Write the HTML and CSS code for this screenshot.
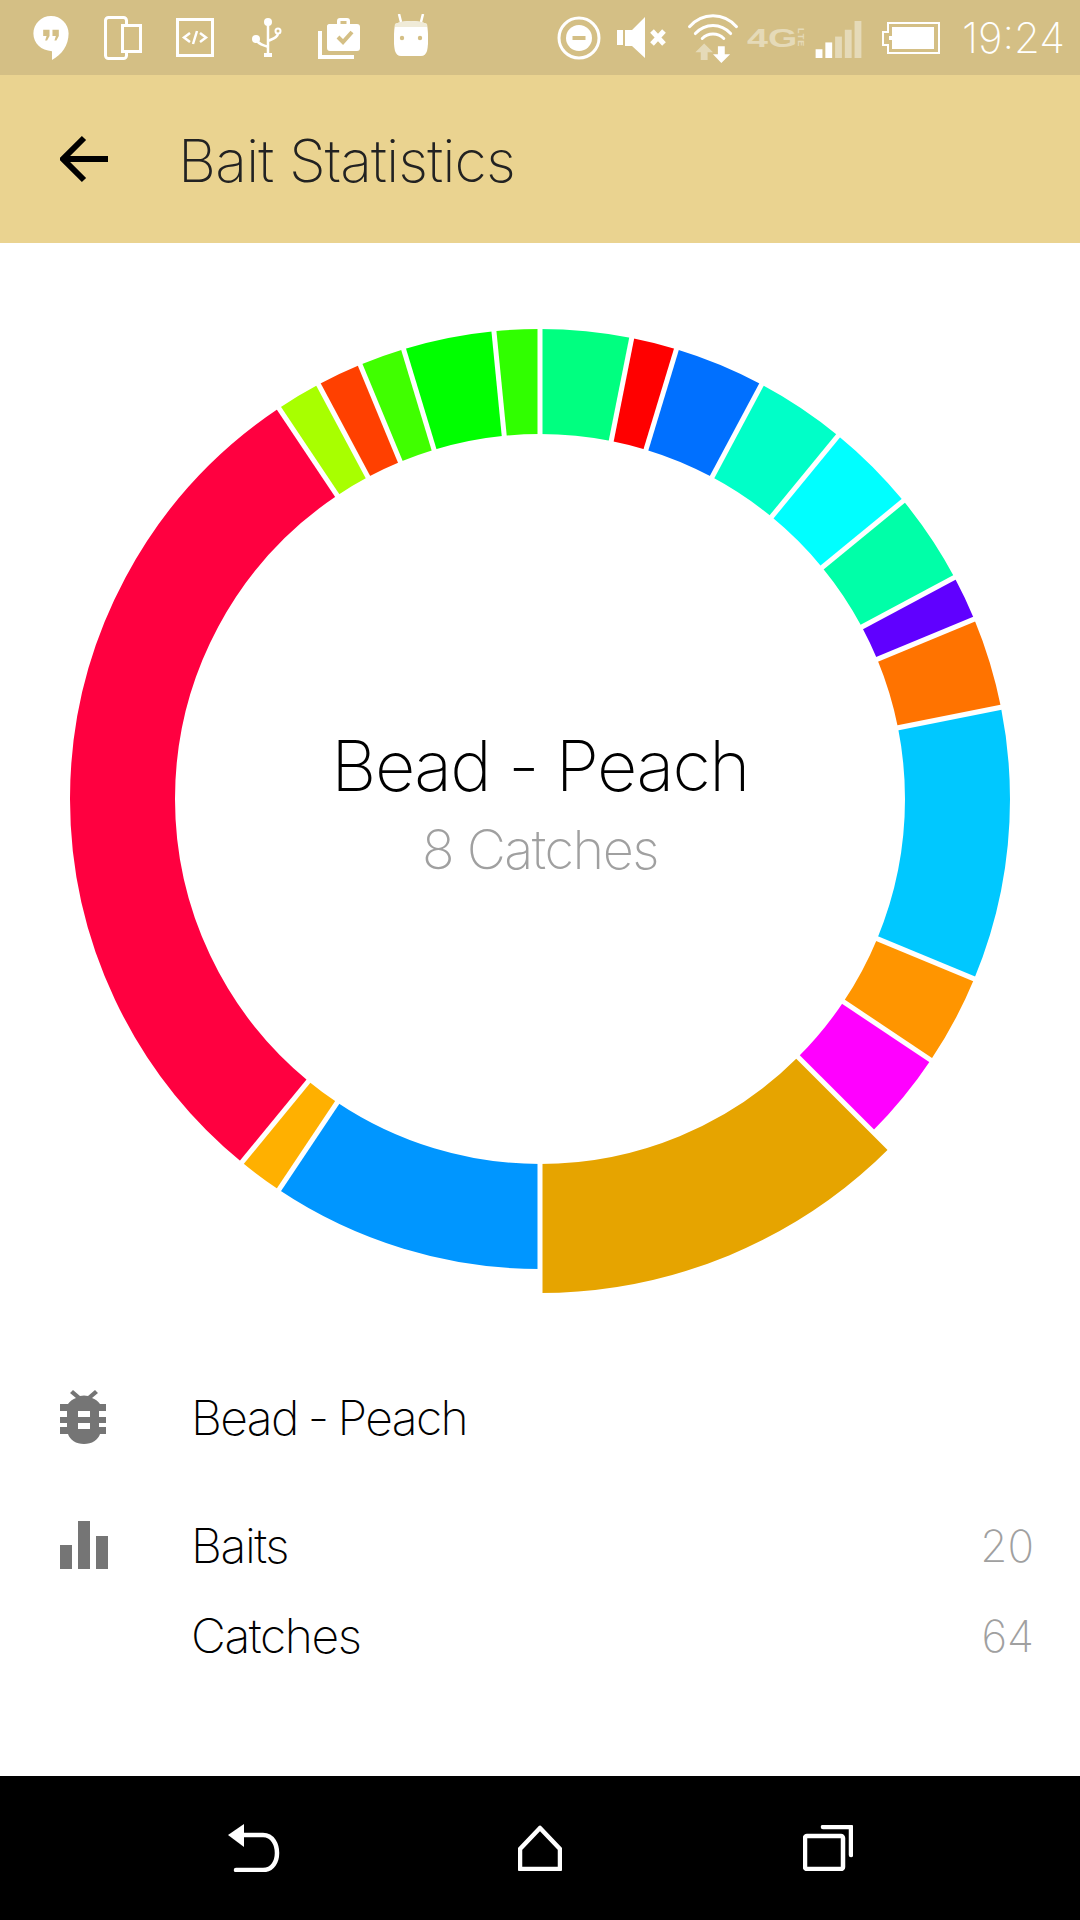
FILE: index.html
```html
<!DOCTYPE html>
<html lang="en">
<head>
  <meta charset="UTF-8" />
  <meta name="viewport" content="width=device-width, initial-scale=1.0"/>
  <title>Bait Statistics</title>
  <link rel="stylesheet" href="styles.css">
</head>
<body>
  <div class="status-bar">
    <div class="status-left">
      <span class="slot">
        <svg width="36" height="44" viewBox="0 0 36 45">
          <path class="w" d="M18 0C8 0 0 8 0 18c0 10 8 17.500 19 18v9c10-5 17-15 17-27C36 8 28 0 18 0z"/>
          <path class="t" d="M10 14h6.500v6.500l-2.500 4.500h-2l1.500-4.500H10zM19.500 14H26v6.500L23.500 25h-2l1.500-4.500h-3.500z"/>
        </svg>
      </span>
      <span class="slot">
        <svg width="38" height="44" viewBox="0 0 38 44">
          <rect class="o" x="1.500" y="1.500" width="21" height="41" rx="3"/>
          <rect class="ot" x="18.500" y="9.500" width="18" height="26"/>
        </svg>
      </span>
      <span class="slot">
        <svg width="38" height="39" viewBox="0 0 38 39">
          <rect class="o" x="1.500" y="1.500" width="35" height="36"/>
          <path class="ln" d="M14 15l-6 4.500 6 4.500M24 15l6 4.500-6 4.500M21 13l-4 13"/>
        </svg>
      </span>
      <span class="slot">
        <svg width="30" height="39" viewBox="0 0 30 39">
          <circle class="w" cx="16" cy="4" r="4"/>
          <circle class="w" cx="4" cy="21" r="4"/>
          <circle class="o2" cx="26" cy="13" r="2.500"/>
          <path class="ln2" d="M16 4v32M4 21c2 6 8 6 12 8M26 15c0 5-6 6-10 8"/>
          <rect class="w" x="12" y="35" width="8" height="4"/>
        </svg>
      </span>
      <span class="slot slot-case">
        <svg width="42" height="41" viewBox="0 0 42 41">
          <path class="ln3" d="M2 13v26h34"/>
          <path class="w" d="M11 6h8V3c0-2 1-3 3-3h7c2 0 3 1 3 3v3h7c2 0 3 1 3 3v21c0 2-1 3-3 3H12c-2 0-3-1-3-3V8c0-1 1-2 2-2zM22.500 3v3h6V3z"/>
          <path class="ck" d="M20 19l5 5 9-10"/>
        </svg>
      </span>
      <span class="slot slot-droid">
        <svg width="34" height="42" viewBox="0 0 34 42">
          <path class="ln2" d="M7 8L5 0M27 8l2-8"/>
          <path class="w" d="M17 7c-6 0-12 1-16 3C0 17-1 28 1 37c1 3 3 5 6 5h20c3 0 5-2 6-5 2-9 1-20 0-27-4-2-10-3-16-3z"/>
          <path class="cap" d="M17 7c-6 0-12 1-16 3v3h32v-3c-4-2-10-3-16-3z"/>
          <circle class="t" cx="8" cy="24" r="2.200"/>
          <circle class="t" cx="26" cy="24" r="2.200"/>
        </svg>
      </span>
    </div>
    <div class="status-right">
      <svg class="ic-dnd" width="44" height="44" viewBox="0 0 44 44">
        <circle class="o" cx="22" cy="22" r="20"/>
        <circle class="w" cx="22" cy="22" r="13"/>
        <rect class="t" x="15.500" y="20" width="13" height="4"/>
      </svg>
      <svg class="ic-vol" width="50" height="42" viewBox="0 0 50 42">
        <path class="w" d="M0 13h6v15H0zM8 13h7L28 0v41L15 29H8z"/>
        <path class="x" d="M35 14l12 13M47 14L35 27"/>
      </svg>
      <svg class="ic-wifi" width="52" height="50" viewBox="0 0 52 51">
        <path class="arc" d="M2 14C15 -1 37 -1 50 14M8 21c10-11 26-11 36 0M15 26c6-6 16-6 22 0"/>
        <path class="dim" d="M17 31l9 9h-5.500v8h-7v-8H8z"/>
        <path class="w" d="M31 34h7v8h5.500L34.500 51 26 42h5z"/>
      </svg>
      <span class="lte">
        <span class="lte-big">4G</span>
        <span class="lte-small">LTE</span>
      </span>
      <svg class="ic-sig" width="47" height="37" viewBox="0 0 47 38">
        <rect class="w" x="0" y="29" width="7" height="9"/>
        <rect class="w" x="10" y="22" width="7" height="16"/>
        <rect class="dim" x="20" y="16" width="7" height="22"/>
        <rect class="dim" x="30" y="9" width="7" height="29"/>
        <rect class="dim" x="40" y="0" width="7" height="38"/>
      </svg>
      <svg class="ic-bat" width="58" height="32" viewBox="0 0 58 32">
        <path class="bat" d="M6 1h51v30H6v-8H1V10h5z"/>
        <path class="w" d="M10 5h42v22H10v-9H7v-4h3z"/>
      </svg>
      <span class="clock">19:24</span>
    </div>
  </div>

  <header class="app-bar">
    <svg class="back" width="48" height="48" viewBox="0 0 48 48">
      <path d="M24 3L3 24l21 21M3 24h45"/>
    </svg>
    <h1>Bait Statistics</h1>
  </header>

  <main class="content">
    <div class="chart">
      <svg class="donut" width="1080" height="1110" viewBox="0 1 1080 1110">
        <g transform="rotate(-90 540 557)" fill="none">
          <circle class="slice" pathLength="64" stroke="#00ff80" stroke-dasharray="2 62" stroke-dashoffset="0"/>
          <circle class="slice" pathLength="64" stroke="#ff0000" stroke-dasharray="1 63" stroke-dashoffset="-2"/>
          <circle class="slice" pathLength="64" stroke="#0070ff" stroke-dasharray="2 62" stroke-dashoffset="-3"/>
          <circle class="slice" pathLength="64" stroke="#00ffc8" stroke-dasharray="2 62" stroke-dashoffset="-5"/>
          <circle class="slice" pathLength="64" stroke="#00ffff" stroke-dasharray="2 62" stroke-dashoffset="-7"/>
          <circle class="slice" pathLength="64" stroke="#00ffa8" stroke-dasharray="2 62" stroke-dashoffset="-9"/>
          <circle class="slice" pathLength="64" stroke="#6000ff" stroke-dasharray="1 63" stroke-dashoffset="-11"/>
          <circle class="slice" pathLength="64" stroke="#ff7300" stroke-dasharray="2 62" stroke-dashoffset="-12"/>
          <circle class="slice" pathLength="64" stroke="#00c8ff" stroke-dasharray="6 58" stroke-dashoffset="-14"/>
          <circle class="slice" pathLength="64" stroke="#ff9500" stroke-dasharray="2 62" stroke-dashoffset="-20"/>
          <circle class="slice" pathLength="64" stroke="#ff00ff" stroke-dasharray="2 62" stroke-dashoffset="-22"/>
          <circle class="slice-on" pathLength="64" stroke="#e6a400" stroke-dasharray="8 56" stroke-dashoffset="-24"/>
          <circle class="slice" pathLength="64" stroke="#0096ff" stroke-dasharray="6 58" stroke-dashoffset="-32"/>
          <circle class="slice" pathLength="64" stroke="#ffb000" stroke-dasharray="1 63" stroke-dashoffset="-38"/>
          <circle class="slice" pathLength="64" stroke="#ff0040" stroke-dasharray="19 45" stroke-dashoffset="-39"/>
          <circle class="slice" pathLength="64" stroke="#a8ff00" stroke-dasharray="1 63" stroke-dashoffset="-58"/>
          <circle class="slice" pathLength="64" stroke="#ff4000" stroke-dasharray="1 63" stroke-dashoffset="-59"/>
          <circle class="slice" pathLength="64" stroke="#40ff00" stroke-dasharray="1 63" stroke-dashoffset="-60"/>
          <circle class="slice" pathLength="64" stroke="#00ff00" stroke-dasharray="2 62" stroke-dashoffset="-61"/>
          <circle class="slice" pathLength="64" stroke="#30ff00" stroke-dasharray="1 63" stroke-dashoffset="-63"/>
        </g>
        <!-- white gaps between the slices -->
        <g class="gaps">
          <line x1="540" y1="557" x2="540" y2="40"/>
          <line x1="540" y1="557" x2="540" y2="40" transform="rotate(11.25 540 557)"/>
          <line x1="540" y1="557" x2="540" y2="40" transform="rotate(16.875 540 557)"/>
          <line x1="540" y1="557" x2="540" y2="40" transform="rotate(28.125 540 557)"/>
          <line x1="540" y1="557" x2="540" y2="40" transform="rotate(39.375 540 557)"/>
          <line x1="540" y1="557" x2="540" y2="40" transform="rotate(50.625 540 557)"/>
          <line x1="540" y1="557" x2="540" y2="40" transform="rotate(61.875 540 557)"/>
          <line x1="540" y1="557" x2="540" y2="40" transform="rotate(67.5 540 557)"/>
          <line x1="540" y1="557" x2="540" y2="40" transform="rotate(78.75 540 557)"/>
          <line x1="540" y1="557" x2="540" y2="40" transform="rotate(112.5 540 557)"/>
          <line x1="540" y1="557" x2="540" y2="40" transform="rotate(123.75 540 557)"/>
          <line x1="540" y1="557" x2="540" y2="40" transform="rotate(135 540 557)"/>
          <line x1="540" y1="557" x2="540" y2="40" transform="rotate(180 540 557)"/>
          <line x1="540" y1="557" x2="540" y2="40" transform="rotate(213.75 540 557)"/>
          <line x1="540" y1="557" x2="540" y2="40" transform="rotate(219.375 540 557)"/>
          <line x1="540" y1="557" x2="540" y2="40" transform="rotate(326.25 540 557)"/>
          <line x1="540" y1="557" x2="540" y2="40" transform="rotate(331.875 540 557)"/>
          <line x1="540" y1="557" x2="540" y2="40" transform="rotate(337.5 540 557)"/>
          <line x1="540" y1="557" x2="540" y2="40" transform="rotate(343.125 540 557)"/>
          <line x1="540" y1="557" x2="540" y2="40" transform="rotate(354.375 540 557)"/>
        </g>
      </svg>
      <div class="chart-label">
        <div class="chart-title">Bead - Peach</div>
        <div class="chart-sub">8 Catches</div>
      </div>
    </div>

    <section class="details">
      <div class="row row-name">
        <svg class="row-icon" width="48" height="54" viewBox="0 0 48 54">
          <path d="M16 8L10 3l3-3 7 6q4-1 8 0l7-6 3 3-6 5c3 1 6 3 8 6h6v7h-7v6h7v6h-7v4h7v7H40c-2 6-8 10-16 10S10 50 8 44H0v-7h7v-4H0v-6h7v-6H0v-7h8c2-3 5-5 8-6z"/>
          <rect class="hole" x="18" y="21" width="12" height="6"/>
          <rect class="hole" x="18" y="33" width="12" height="6"/>
        </svg>
        <span class="row-label label-name">Bead - Peach</span>
      </div>
      <div class="row">
        <svg class="row-icon" width="48" height="48" viewBox="0 0 48 48">
          <path d="M0 24h12v24H0zM18 0h12v48H18zM36 15h12v33H36z"/>
        </svg>
        <span class="row-label">Baits</span>
        <span class="row-value">20</span>
      </div>
      <div class="row">
        <span class="row-label row-indent">Catches</span>
        <span class="row-value">64</span>
      </div>
    </section>
  </main>

  <nav class="nav-bar">
    <svg class="nav-back" width="52" height="48" viewBox="0 0 52 48">
      <path class="nav-ln" d="M8 46h27c10 0 14-9 14-17S45 11 35 11H14"/>
      <path class="w" d="M0 11L16 0v23z"/>
    </svg>
    <svg class="nav-home" width="44" height="46" viewBox="0 0 44 46">
      <path class="nav-ln" d="M22 3L2 24v20h40V24z"/>
    </svg>
    <svg class="nav-rec" width="50" height="46" viewBox="0 0 50 46">
      <rect class="nav-ln" x="2" y="11" width="38" height="33" rx="2"/>
      <path class="nav-ln" d="M20 2h28v28"/>
    </svg>
  </nav>
</body>
</html>
```

FILE: styles.css
```css
body {
  margin: 0;
  width: 1080px;
  height: 1920px;
  display: flex;
  flex-direction: column;
  background: white;
  font-family: Inter, "Liberation Sans", sans-serif;
  font-weight: 200;
  overflow: hidden;
}
svg {
  display: block;
  flex: none;
}

/* shared icon paints */
.w { fill: white; }
.t { fill: #d4bf85; }
.o { fill: none; stroke: white; stroke-width: 3; }
.ot { fill: #d4bf85; stroke: white; stroke-width: 3; }
.o2 { fill: none; stroke: white; stroke-width: 2; }
.dim { fill: #e5dab8; }
.ln { fill: none; stroke: white; stroke-width: 2.5; }
.ln2 { fill: none; stroke: white; stroke-width: 2.5; }
.ln3 { fill: none; stroke: white; stroke-width: 4; }
.ck { fill: none; stroke: #d4bf85; stroke-width: 4; }
.cap { fill: #f0ebd8; }
.x { fill: none; stroke: white; stroke-width: 5; }
.arc { fill: none; stroke: white; stroke-width: 3; stroke-linecap: round; }
.bat { fill: none; stroke: white; stroke-width: 2; }

.status-bar {
  height: 75px;
  flex: none;
  background: #d4bf85;
  display: flex;
  align-items: center;
  justify-content: space-between;
  padding: 0 15px;
}
.status-left {
  display: flex;
  align-items: center;
}
.slot {
  width: 72px;
  display: flex;
  justify-content: center;
}
.slot-case { margin-top: 2px; }
.slot-droid { margin-bottom: 6px; }
.status-right {
  display: flex;
  align-items: center;
}
.ic-vol { margin-left: 16px; }
.ic-wifi { margin-left: 20px; }
.lte {
  width: 58px;
  margin-left: 8px;
  display: flex;
  align-items: center;
  justify-content: space-between;
  font-family: "Liberation Sans", sans-serif;
  font-weight: bold;
  color: #e5dab8;
}
.lte-big {
  font-size: 26px;
  line-height: 20px;
  transform: scaleX(1.45);
  transform-origin: left;
}
.lte-small {
  font-size: 9px;
  line-height: 9px;
  letter-spacing: 1px;
  writing-mode: vertical-rl;
}
.ic-sig { margin-left: 10px; margin-top: 3px; }
.ic-bat { margin-left: 20px; }
.clock {
  margin-left: 22px;
  color: white;
  font-size: 42px;
  font-weight: 150;
}

.app-bar {
  height: 168px;
  flex: none;
  background: #ead390;
  display: flex;
  align-items: center;
  padding-left: 60px;
}
.back {
  fill: none;
  stroke: black;
  stroke-width: 6;
}
h1 {
  margin: 2px 0 0 70px;
  font-size: 59px;
  font-weight: 200;
  letter-spacing: -0.9px;
  color: #222;
}

.content {
  flex: 1;
}
.chart {
  position: relative;
  height: 1110px;
}
.slice {
  cx: 540px;
  cy: 557px;
  r: 417.5px;
  stroke-width: 105;
}
.slice-on {
  cx: 540px;
  cy: 557px;
  r: 429.5px;
  stroke-width: 129;
}
.gaps line {
  stroke: white;
  stroke-width: 5;
}
.chart-label {
  position: absolute;
  top: 479px;
  left: 0;
  right: 0;
  text-align: center;
}
.chart-title {
  font-size: 70px;
  line-height: 88px;
  letter-spacing: -1.6px;
  color: black;
}
.chart-sub {
  margin-top: 7px;
  font-size: 54px;
  line-height: 66px;
  letter-spacing: -1.5px;
  color: #a0a0a0;
}

.details {
  padding: 19px 46px 0 60px;
}
.row {
  display: flex;
  align-items: center;
  height: 90px;
}
.row-name {
  margin-bottom: 38px;
}
.row-icon {
  fill: #757575;
}
.hole {
  fill: white;
}
.row-label {
  margin-left: 83px;
  font-size: 48px;
  letter-spacing: -1.4px;
  color: black;
}
.label-name {
  letter-spacing: -1.6px;
  word-spacing: -2px;
}
.row-indent {
  margin-left: 131px;
}
.row-value {
  margin: 2px 0 0 auto;
  font-size: 44px;
  color: #a0a0a0;
}

.nav-bar {
  height: 144px;
  flex: none;
  background: black;
  display: flex;
  align-items: center;
  padding-left: 228px;
}
.nav-ln {
  fill: none;
  stroke: white;
  stroke-width: 4.5;
  stroke-linecap: round;
  stroke-linejoin: round;
}
.nav-home { margin-left: 238px; }
.nav-rec { margin-left: 241px; }
```
